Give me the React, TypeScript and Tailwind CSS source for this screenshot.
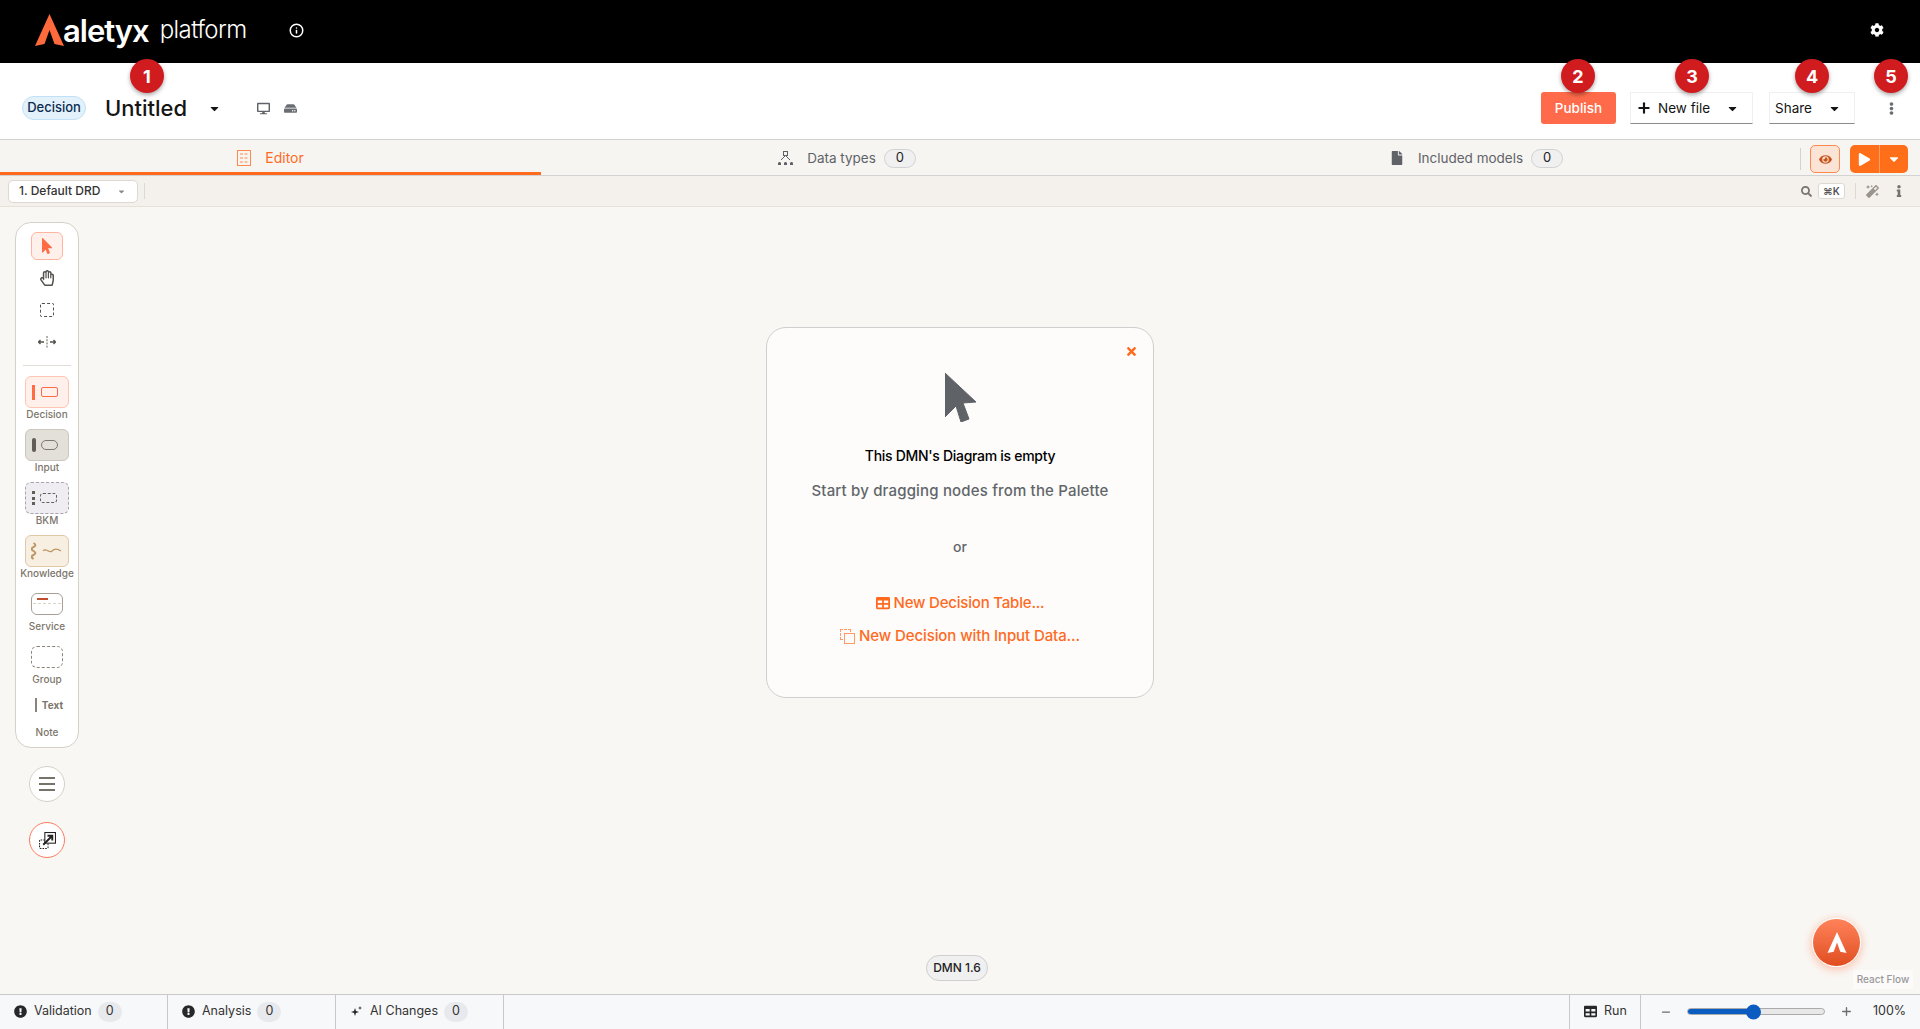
import type { ReactNode } from 'react';
import { Info, Plus, Minus } from 'lucide-react';
import {
  FaCog, FaCaretDown, FaEllipsisV, FaDesktop, FaHdd, FaFile, FaSearch, FaMagic, FaInfo, FaEye,
  FaPlay, FaTimes, FaTable, FaExclamationCircle, FaMousePointer, FaRegHandPaper,
} from 'react-icons/fa';

function Marker({ n, className }: { n: number; className: string }) {
  return (
    <div className={`absolute top-[59px] z-10 flex h-[34px] w-[34px] items-center justify-center rounded-full bg-[#d01c1f] text-[18px] font-bold text-white shadow-[0_2px_4px_rgba(0,0,0,0.35)] ${className}`}>
      {n}
    </div>
  );
}

function AletyxMark({ className, fill }: { className: string; fill: string }) {
  return (
    <svg viewBox="0 0 29 32" className={className}>
      <path d="M14.5 0 L29 32 L19.5 30 L14.5 16 L9.5 30 L0 32 Z" fill={fill} />
    </svg>
  );
}

function Count({ value }: { value: number }) {
  return (
    <span className="ml-2 flex h-[19px] w-[32px] items-center justify-center rounded-full border border-[#d2d2d2] bg-[#f0f0f0] text-[13px] text-[#222]">
      {value}
    </span>
  );
}

function NodeItem({ label, box, labelClass, children }: { label: string; box: string; labelClass?: string; children: ReactNode }) {
  return (
    <div className="flex h-[53px] w-full flex-col items-center">
      <div className={box}>{children}</div>
      <span className={`text-[10px] leading-[14px] font-medium text-[#7c756b] ${labelClass ?? ''}`}>{label}</span>
    </div>
  );
}

function Palette() {
  return (
    <div className="flex h-[526px] w-16 flex-col items-center rounded-2xl border border-[#d6d1c6] bg-white pt-[9px]">
      <div className="flex h-[28px] w-[32px] items-center justify-center rounded-md border border-[#ffb5a0] bg-[#fff0eb]">
        <FaMousePointer className="text-[16px] text-[#ff6b45]" />
      </div>
      <div className="mt-[2px] flex h-8 items-center justify-center">
        <FaRegHandPaper className="text-[16px] text-[#55524c]" />
      </div>
      <div className="flex h-8 items-center justify-center">
        <div className="h-[14px] w-[14px] rounded-[2px] border-[1.5px] border-dashed border-[#55524c]" />
      </div>
      <div className="flex h-8 items-center justify-center">
        <svg width="18" height="12" viewBox="0 0 18 12" fill="none" stroke="#55524c" strokeWidth="1.4">
          <path d="M0.5 6 H6 M2.5 4 L0.5 6 L2.5 8 M12 6 H17.5 M15.5 4 L17.5 6 L15.5 8" />
          <path d="M9 0 V12" strokeDasharray="2 1.2" strokeWidth="0.9" />
        </svg>
      </div>
      <div className="mt-[7px] h-px w-12 bg-[#e2ded6]" />
      <div className="mt-[10px] w-full">
        <NodeItem label="Decision" labelClass="-mt-px" box="flex h-8 w-11 mx-auto shrink-0 items-center gap-[6px] rounded-md border border-[#ffc4b3] bg-[#fff0eb] pl-[6px]">
          <div className="h-[15px] w-[3px] bg-[#ff6b45]" />
          <div className="h-[10px] w-[17px] rounded-[2px] border-[1.5px] border-[#ff6b45]" />
        </NodeItem>
        <NodeItem label="Input" labelClass="-mt-px" box="flex h-8 w-11 mx-auto shrink-0 items-center gap-[5px] rounded-md border border-[#ccc7be] bg-[#e3dfd9] pl-[6px]">
          <div className="h-[14px] w-[4px] rounded-full bg-[#635f58]" />
          <div className="h-[10px] w-[17px] rounded-full border border-[#7d786f]" />
        </NodeItem>
        <NodeItem label="BKM" labelClass="-mt-px" box="flex h-8 w-11 mx-auto shrink-0 items-center gap-[5px] rounded-md border border-dashed border-[#a8a3ad] bg-[#efedf2] pl-[6px]">
          <div className="flex h-[14px] w-[3px] flex-col justify-between">
            <div className="h-[3px] w-[3px] bg-[#635f58]" />
            <div className="h-[3px] w-[3px] bg-[#635f58]" />
            <div className="h-[3px] w-[3px] bg-[#635f58]" />
          </div>
          <div className="h-[10px] w-[17px] rounded-[3px] border border-dashed border-[#635f58]" />
        </NodeItem>
        <NodeItem label="Knowledge" labelClass="-mt-px" box="flex h-8 w-11 mx-auto shrink-0 items-center justify-center rounded-md border border-[#e0c9a8] bg-[#f8efe3]">
          <svg width="32" height="18" viewBox="0 0 32 18" fill="none" stroke="#bd9664">
            <path d="M2.5 1 C5 2.5 5 4 2.5 5 C0 6.5 0 7.5 2.5 9 C5 10.5 5 11.5 2.5 13 C0 14 0 15.5 2.5 17" strokeWidth="2" />
            <path d="M12 9 C15 5 18 12 21 9 C24 6 27 7 30 9" strokeWidth="1.2" />
          </svg>
        </NodeItem>
        <NodeItem label="Service" labelClass="mt-[4px]" box="relative mx-auto mt-[5px] h-[22px] w-8 shrink-0 rounded-md border border-[#a89f96] bg-white">
          <div className="absolute top-[4px] left-[5px] h-[2px] w-[11px] bg-[#c0502f]" />
          <div className="absolute top-[9px] right-[1px] left-[1px] border-t border-dashed border-[#d8d4cc]" />
        </NodeItem>
        <NodeItem label="Group" labelClass="mt-[4px]" box="mx-auto mt-[5px] h-[22px] w-8 shrink-0 rounded-md border border-dashed border-[#8a8379]">
          <span />
        </NodeItem>
        <div className="flex h-[53px] w-full flex-col items-center">
          <div className="mt-[4px] ml-[4px] flex h-[14px] items-center gap-[5px]">
            <div className="h-[14px] w-[2px] bg-[#8a8379]" />
            <span className="text-[10px] font-bold text-[#7c756b]">Text</span>
          </div>
          <span className="mt-[13px] text-[10px] leading-[14px] font-medium text-[#7c756b]">Note</span>
        </div>
      </div>
    </div>
  );
}

function EmptyDialog() {
  return (
    <div className="absolute top-[120px] left-[766px] h-[371px] w-[388px] rounded-[20px] border border-[#cfcfcf] bg-[#fdfcfa]">
      <FaTimes className="absolute top-[17px] right-[15px] text-[13px] text-[#ff6a1f]" />
      <div className="flex flex-col items-center">
        <svg viewBox="0 0 31 49" className="mt-[45px] h-[49px] w-[31px]">
          <path d="M0 0 L31 29 L18 30 L24 46 L16 49 L11 33 L0 44 Z" fill="#5f6368" stroke="#5f6368" strokeLinejoin="round" />
        </svg>
        <p className="mt-[24px] text-[14px] leading-5 font-medium tracking-[-0.3px] text-black">This DMN&apos;s Diagram is empty</p>
        <p className="mt-[15px] text-[15px] leading-5 font-medium tracking-[0.17px] text-[#62666a]">Start by dragging nodes from the Palette</p>
        <p className="mt-[36px] text-[14px] leading-5 font-medium text-[#62666a]">or</p>
        <button className="mt-[36px] flex items-center gap-[4px] text-[15px] leading-5 font-medium tracking-[-0.2px] text-[#ff6a1f]">
          <FaTable className="text-[14px]" />
          New Decision Table...
        </button>
        <button className="mt-[13px] flex items-center gap-[4px] text-[15px] leading-5 font-medium tracking-[-0.1px] text-[#ff6a1f]">
          <span className="relative h-[15px] w-[15px]">
            <span className="absolute top-0 left-0 h-[11px] w-[11px] border border-dashed border-[#ff9a66]" />
            <span className="absolute right-0 bottom-0 h-[11px] w-[11px] border border-[#ff9a66] bg-[#fdfcfa]" />
          </span>
          New Decision with Input Data...
        </button>
      </div>
    </div>
  );
}

function BottomTab({ icon, label, count, width }: { icon: ReactNode; label: string; count: number; width: string }) {
  return (
    <div className={`flex h-full items-center border-r border-[#c9c9c9] pb-px pl-[14px] text-[12.5px] text-[#333] ${width}`}>
      {icon}
      <span className="ml-[7px]">{label}</span>
      <span className="ml-[6px] flex h-5 w-6 items-center justify-center rounded-full bg-[#e7e9ed]">{count}</span>
    </div>
  );
}

export default function App() {
  return (
    <div className="relative flex h-screen flex-col overflow-hidden bg-[#f9f7f4] font-['Inter',sans-serif]">
      <Marker n={1} className="left-[130px]" />
      <Marker n={2} className="left-[1561px]" />
      <Marker n={3} className="left-[1675px]" />
      <Marker n={4} className="left-[1795px]" />
      <Marker n={5} className="left-[1874px]" />

      <header className="flex h-[63px] shrink-0 items-center bg-black pr-[36px] pb-[3px] pl-[35px] text-white">
        <AletyxMark className="h-8 w-[29px]" fill="#ff6a3d" />
        <span className="ml-[-1px] text-[31px] leading-none font-semibold tracking-[-1px]">aletyx</span>
        <span className="ml-[11px] text-[24px] leading-none font-light tracking-[-0.6px]">platform</span>
        <Info className="ml-[42px]" size={15} strokeWidth={2.4} />
        <FaCog className="ml-auto text-[14px]" />
      </header>

      <div className="flex h-[77px] shrink-0 items-center border-b border-[#d2d2d2] bg-white pt-[14px] pr-[22px] pl-[22px]">
        <span className="flex h-6 w-16 items-center justify-center rounded-full border border-[#bfe0f5] bg-[#e3f1fb] text-[13px] font-medium text-[#0b2c4f]">Decision</span>
        <span className="ml-[19px] text-[22px] leading-none font-medium text-[#151515]">Untitled</span>
        <FaCaretDown className="ml-[21px] text-[13px] text-[#151515]" />
        <FaDesktop className="ml-[36px] text-[13px] text-[#5f6368]" />
        <FaHdd className="ml-[14px] text-[13px] text-[#6a6e73]" />
        <button className="ml-auto h-8 w-[75px] rounded-[3px] bg-[#ff6b4a] text-[13.5px] font-medium text-white">Publish</button>
        <button className="ml-[14px] flex h-8 w-[123px] items-center border border-[#f0f0f0] border-b-[#8a8d90] pl-[5px] text-[13.5px] text-[#151515]">
          <Plus size={16} strokeWidth={3.2} />
          <span className="ml-[6px]">New file</span>
          <FaCaretDown className="mr-[13px] ml-auto text-[13px]" />
        </button>
        <button className="ml-[16px] flex h-8 w-[86px] items-center border border-[#f0f0f0] border-b-[#8a8d90] pl-[5px] text-[13.5px] text-[#151515]">
          Share
          <FaCaretDown className="mr-[13px] ml-auto text-[13px]" />
        </button>
        <FaEllipsisV className="ml-[30px] text-[13px] text-[#6a6e73]" />
      </div>

      <div className="flex h-[36px] shrink-0 items-center border-b border-[#d2d2d2] bg-[#f7f5f2] text-[13.5px]">
        <div className="flex h-full w-[541px] items-center justify-center border-b-[3px] border-[#ff6a1f] pt-[3px] text-[14px] text-[#ff6a1f]">
          <svg width="14" height="16" viewBox="0 0 14 16" fill="none" stroke="#ff8a4d" className="mr-[14px]">
            <rect x="0.5" y="0.5" width="13" height="15" />
            <path d="M3 4 H11 M3 8 H11 M3 12 H11" strokeDasharray="3 1.5" />
          </svg>
          Editor
        </div>
        <div className="flex h-full w-[610px] items-center justify-center pt-px pl-[2px] text-[#5f6368]">
          <svg width="15" height="14" viewBox="0 0 15 14" fill="#5f6368" className="mr-[14px]">
            <rect x="5.5" y="0.5" width="4" height="4" fill="none" stroke="#5f6368" />
            <path d="M7.5 4.5 L3 9 M7.5 4.5 L12 9" stroke="#5f6368" fill="none" />
            <path d="M0 14 L0 12 A1.6 1.6 0 0 1 3 12 L3 14 Z M6 14 L6 12 A1.6 1.6 0 0 1 9 12 L9 14 Z M12 14 L12 12 A1.6 1.6 0 0 1 15 12 L15 14 Z" />
          </svg>
          Data types
          <Count value={0} />
        </div>
        <div className="flex h-full w-[649px] items-center justify-center pt-px pl-[2px] text-[#5f6368]">
          <FaFile className="mr-[14px] text-[14px]" />
          Included models
          <Count value={0} />
        </div>
        <div className="mt-[3px] h-[22px] w-px bg-[#d2d2d2]" />
        <button className="mt-[3px] ml-[9px] flex h-7 w-[30px] items-center justify-center rounded-[5px] border border-[#ff8a4d] bg-[#fbe3d6]">
          <FaEye className="text-[13px] text-[#c9541a]" />
        </button>
        <div className="mt-[3px] ml-[10px] flex h-7 w-[58px] items-center overflow-hidden rounded-[5px] bg-[#ff6f1a] text-white">
          <div className="flex h-full w-[30px] items-center justify-center border-r border-[#ffa06b]">
            <FaPlay className="text-[13px]" />
          </div>
          <div className="flex flex-1 items-center justify-center">
            <FaCaretDown className="text-[14px]" />
          </div>
        </div>
      </div>

      <div className="flex h-[31px] shrink-0 items-center border-b border-[#e6e1d9] bg-[#f4f1ed] pr-[15px] pl-2">
        <div className="flex h-[23px] w-[130px] items-center justify-between rounded-[5px] border border-[#ddd8d0] bg-white pr-[11px] pl-[10px] text-[12px] font-medium text-[#333]">
          1. Default DRD
          <FaCaretDown className="text-[9px] text-[#888]" />
        </div>
        <div className="ml-[6px] h-4 w-px bg-[#ddd8d0]" />
        <FaSearch className="ml-auto text-[11px] text-[#77736c]" />
        <span className="ml-[6px] flex h-[16px] w-[27px] items-center justify-center rounded-[3px] border border-[#ddd8d0] bg-white text-[10px] font-semibold text-[#555]">⌘K</span>
        <div className="ml-[10px] h-4 w-px bg-[#ddd8d0]" />
        <FaMagic className="ml-[10px] text-[13px] text-[#9a958c]" />
        <FaInfo className="ml-[14px] text-[12px] text-[#77736c]" />
      </div>

      <main className="relative min-h-0 flex-1 pt-[15px] pl-[15px]">
        <Palette />
        <div className="flex w-16 flex-col items-center">
          <div className="mt-[18px] flex h-9 w-9 items-center justify-center rounded-full border border-[#d6d1c6] bg-white">
            <div className="flex flex-col gap-[4px]">
              <div className="h-[2px] w-4 bg-[#77736a]" />
              <div className="h-[2px] w-4 bg-[#77736a]" />
              <div className="h-[2px] w-4 bg-[#77736a]" />
            </div>
          </div>
          <div className="mt-[20px] flex h-9 w-9 items-center justify-center rounded-full border border-[#ff7a5c] bg-white">
            <svg width="17" height="17" viewBox="0 0 16 16" fill="none" stroke="#222">
              <rect x="0.5" y="7.5" width="8" height="8" rx="1" strokeDasharray="1.5 1" />
              <rect x="5.5" y="0.5" width="10" height="10" fill="#fff" />
              <path d="M4 12 L12 4 M8 3.5 H12.5 V8" strokeWidth="1.8" />
            </svg>
          </div>
        </div>

        <EmptyDialog />

        <span className="absolute top-[748px] left-[926px] flex h-[26px] w-[62px] items-center justify-center rounded-full border border-[#cfcfcf] bg-[#f0f0f0] text-[12px] font-medium text-[#222]">DMN 1.6</span>

        <div className="absolute top-[711px] left-[1812px] flex h-[49px] w-[49px] items-center justify-center rounded-full border border-white bg-gradient-to-b from-[#ff8259] to-[#e04d1e] shadow-[0_2px_10px_rgba(255,110,60,0.45)]">
          <AletyxMark className="h-[21px] w-[22px]" fill="#fff" />
        </div>
        <span className="absolute top-[763px] left-[1853px] flex h-[19px] w-[60px] items-center justify-center bg-white/50 text-[10px] font-medium text-[#999]">React Flow</span>
      </main>

      <footer className="flex h-[35px] shrink-0 items-center border-t border-[#c9c9c9] bg-[#f7f8fa]">
        <BottomTab width="w-[168px]" label="Validation" count={0} icon={<FaExclamationCircle className="text-[13px] text-[#26282b]" />} />
        <BottomTab width="w-[168px]" label="Analysis" count={0} icon={<FaExclamationCircle className="text-[13px] text-[#26282b]" />} />
        <BottomTab
          width="w-[168px]"
          label="AI Changes"
          count={0}
          icon={
            <svg width="13" height="13" viewBox="0 0 13 13" fill="#26282b">
              <path d="M5 3 L6 6 L9 7 L6 8 L5 11 L4 8 L1 7 L4 6 Z" />
              <path d="M10 1 L10.5 2.5 L12 3 L10.5 3.5 L10 5 L9.5 3.5 L8 3 L9.5 2.5 Z" />
            </svg>
          }
        />
        <div className="ml-auto flex h-full w-[72px] items-center border-x border-[#c9c9c9] pb-px pl-[14px] text-[12.5px] text-[#333]">
          <FaTable className="text-[13px] text-[#26282b]" />
          <span className="ml-[7px]">Run</span>
        </div>
        <div className="flex w-[279px] items-center pb-px pl-[19px] text-[12.5px] text-[#333]">
          <Minus size={12} strokeWidth={2.5} className="text-[#6a6e73]" />
          <div className="relative ml-[15px] h-[7px] w-[138px] rounded-full border border-[#aaa] bg-[#e8e8e8]">
            <div className="h-full w-[66px] rounded-full bg-[#0b5cc0]" />
            <div className="absolute top-1/2 left-[58px] h-[15px] w-[15px] -translate-y-1/2 rounded-full bg-[#0b5cc0]" />
          </div>
          <Plus size={13} strokeWidth={2.5} className="ml-[15px] text-[#6a6e73]" />
          <span className="ml-[20px]">100%</span>
        </div>
      </footer>
    </div>
  );
}
